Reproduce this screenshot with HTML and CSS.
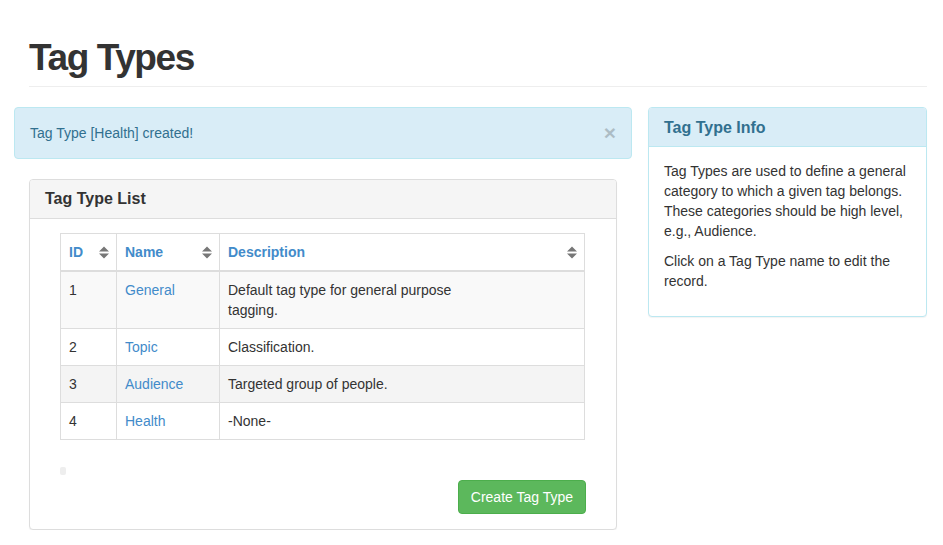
FILE: index.html
```html
<!DOCTYPE html>
<html>
<head>
<meta charset="utf-8">
<link rel="stylesheet" href="styles.css">
</head>
<body>
<div class="page">
  <div class="page-header"><h1>Tag Types</h1></div>
  <div class="row">
    <div class="main">
      <div class="alert">
        <span>Tag Type [Health] created!</span>
        <span class="close">×</span>
      </div>
      <div class="panel list-panel">
        <div class="panel-heading"><h3>Tag Type List</h3></div>
        <div class="panel-body">
          <div class="table-wrap">
            <table class="grid">
              <thead>
                <tr>
                  <th class="c-id"><div class="th-in"><span>ID</span><svg class="sort" viewBox="0 0 10 13" width="10" height="13"><path d="M0 5.5 L5 0.5 L10 5.5 Z M0 7.5 L10 7.5 L5 12.5 Z" fill="#777"/></svg></div></th>
                  <th class="c-name"><div class="th-in"><span>Name</span><svg class="sort" viewBox="0 0 10 13" width="10" height="13"><path d="M0 5.5 L5 0.5 L10 5.5 Z M0 7.5 L10 7.5 L5 12.5 Z" fill="#777"/></svg></div></th>
                  <th class="c-desc"><div class="th-in"><span>Description</span><svg class="sort" viewBox="0 0 10 13" width="10" height="13"><path d="M0 5.5 L5 0.5 L10 5.5 Z M0 7.5 L10 7.5 L5 12.5 Z" fill="#777"/></svg></div></th>
                </tr>
              </thead>
              <tbody>
                <tr class="odd">
                  <td>1</td>
                  <td><a>General</a></td>
                  <td><div class="desc">Default tag type for general purpose tagging.</div></td>
                </tr>
                <tr>
                  <td>2</td>
                  <td><a>Topic</a></td>
                  <td><div class="desc">Classification.</div></td>
                </tr>
                <tr class="odd hover">
                  <td>3</td>
                  <td><a>Audience</a></td>
                  <td><div class="desc">Targeted group of people.</div></td>
                </tr>
                <tr>
                  <td>4</td>
                  <td><a>Health</a></td>
                  <td><div class="desc">-None-</div></td>
                </tr>
              </tbody>
            </table>
            <div class="pager"><span class="pager-dot"></span></div>
            <div class="actions"><button class="btn-success">Create Tag Type</button></div>
          </div>
        </div>
      </div>
    </div>
    <div class="side">
      <div class="panel info-panel">
        <div class="panel-heading"><h3>Tag Type Info</h3></div>
        <div class="panel-body">
          <p>Tag Types are used to define a general category to which a given tag belongs. These categories should be high level, e.g., Audience.</p>
          <p>Click on a Tag Type name to edit the record.</p>
        </div>
      </div>
    </div>
  </div>
</div>
</body>
</html>
```

FILE: styles.css
```css
* { box-sizing: border-box; }
html, body { margin: 0; padding: 0; background: #fff; }
body {
  font-family: "Liberation Sans", Arial, sans-serif;
  font-size: 14px;
  line-height: 20px;
  color: #333;
}
.page {
  padding: 0 16px 0 14px;
}
.page-header {
  margin: 0 0 20px 15px;
  padding: 38px 0 8px;
  border-bottom: 1px solid #eee;
}
.page-header h1 {
  margin: 0;
  font-size: 37px;
  line-height: 40px;
  font-weight: bold;
  letter-spacing: -1.4px;
  color: #333;
}
.row {
  display: flex;
  gap: 16px;
  align-items: flex-start;
}
.main { width: 618px; flex: none; }
.side { flex: 1; }

.alert {
  display: flex;
  justify-content: space-between;
  align-items: center;
  background: #d9edf7;
  border: 1px solid #bce8f1;
  color: #31708f;
  border-radius: 4px;
  padding: 15px 15px 15px 15px;
  margin-bottom: 20px;
  height: 52px;
}
.close {
  font-size: 21px;
  font-weight: bold;
  color: #000;
  opacity: 0.2;
  line-height: 20px;
  margin-right: 0;
}

.panel {
  background: #fff;
  border: 1px solid #ddd;
  border-radius: 4px;
  box-shadow: 0 1px 1px rgba(0,0,0,0.05);
}
.panel-heading {
  padding: 10px 15px;
  border-bottom: 1px solid #ddd;
  background: #f5f5f5;
  border-radius: 3px 3px 0 0;
}
.panel-heading h3 {
  margin: 0;
  font-size: 16px;
  line-height: 18px;
  font-weight: bold;
  color: #333;
}
.list-panel { margin: 0 15px; }
.list-panel .panel-heading { height: 39px; }
.panel-body { padding: 15px; }
.list-panel .panel-body { padding: 14px 16px 15px 15px; }
.table-wrap { padding: 0 15px 0 15px; }

.info-panel { border-color: #bce8f1; }
.info-panel .panel-heading {
  background: #d9edf7;
  border-color: #bce8f1;
  height: 39px;
  padding-top: 11px;
}
.info-panel .panel-heading h3 { color: #31708f; }
.info-panel .panel-body { padding: 14px 15px 15px; }
.info-panel p { margin: 0 0 10px; }

.grid {
  width: 100%;
  border-collapse: collapse;
  border: 1px solid #ddd;
}
.grid th, .grid td {
  border: 1px solid #ddd;
  padding: 8px;
  text-align: left;
  vertical-align: top;
  line-height: 20px;
}
.grid th {
  color: #428bca;
  font-weight: bold;
  border-bottom: 2px solid #ddd;
}
.th-in {
  display: flex;
  justify-content: space-between;
  align-items: center;
}
.sort { display: block; margin-right: -1px; }
.c-id { width: 56px; }
.c-name { width: 103px; }
.grid tr.odd td { background: #f9f9f9; }
.grid tr.hover td { background: #f4f4f4; }
.grid a { color: #428bca; text-decoration: none; }
.desc { max-width: 250px; }

.pager { height: 40px; padding-top: 27px; }
.pager-dot {
  display: block;
  width: 6px;
  height: 8px;
  border-radius: 2px;
  background: #eee;
}
.actions { display: flex; justify-content: flex-end; }
.btn-success {
  font-family: "Liberation Sans", Arial, sans-serif;
  font-size: 14px;
  line-height: 20px;
  color: #fff;
  background: #5cb85c;
  border: 1px solid #4cae4c;
  border-radius: 4px;
  padding: 6px 12px;
  height: 34px;
  white-space: nowrap;
  margin-right: -1px;
}
```
